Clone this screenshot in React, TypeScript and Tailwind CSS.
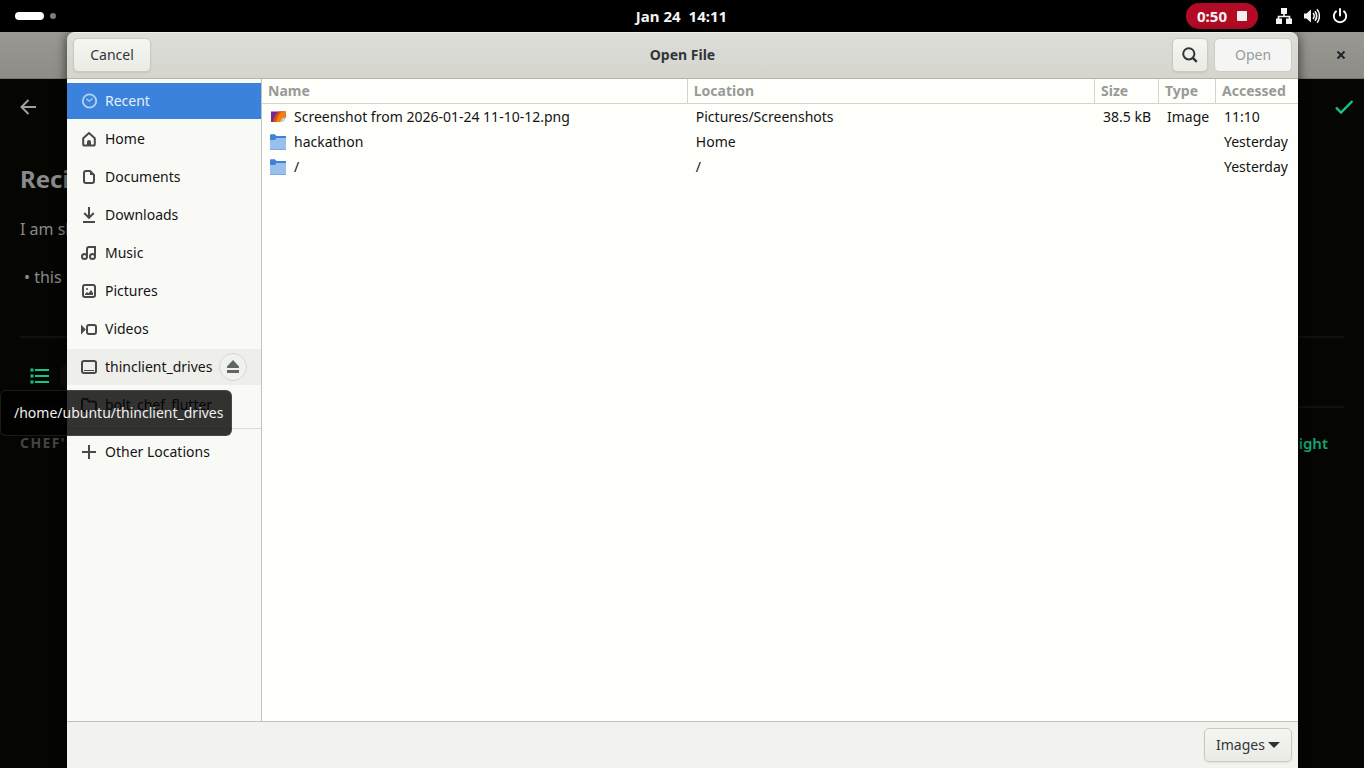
import type { ReactNode } from "react";

function Icon({ children, className = "h-4 w-4" }: { children: ReactNode; className?: string }) {
  return (
    <svg
      viewBox="0 0 16 16"
      className={`${className} shrink-0`}
      fill="none"
      stroke="currentColor"
      strokeWidth="2"
      aria-hidden="true"
    >
      {children}
    </svg>
  );
}

const icons = {
  recent: (
    <Icon>
      <circle cx="8.5" cy="8" r="6.7" strokeWidth="1.8" />
      <path d="M5.3 5.8 8.3 8.2 11.6 5.4" strokeWidth="1.2" />
    </Icon>
  ),
  home: (
    <Icon>
      <path d="M2.2 7.2 8 2l5.8 5.2V13a1.6 1.6 0 0 1-1.6 1.6H3.8A1.6 1.6 0 0 1 2.2 13Z" strokeLinejoin="round" />
      <path d="M6 15v-4a2 2 0 0 1 4 0v4Z" fill="currentColor" stroke="none" />
    </Icon>
  ),
  documents: (
    <Icon>
      <path d="M9 2H5a2 2 0 0 0-2 2v8a2 2 0 0 0 2 2h6a2 2 0 0 0 2-2V6Z" />
      <path d="M9 1.5V6h4.5Z" fill="currentColor" stroke="none" />
    </Icon>
  ),
  downloads: (
    <Icon>
      <path d="M8 0v10M3.2 6 8 10.8 12.8 6M2 15h12" />
    </Icon>
  ),
  music: (
    <Icon>
      <circle cx="3.5" cy="11.5" r="2.5" />
      <circle cx="11.5" cy="11.5" r="2.5" />
      <path d="M6 11.5V4a2 2 0 0 1 2-2h6v9.5" />
    </Icon>
  ),
  pictures: (
    <Icon>
      <rect x="2" y="2" width="12" height="12" rx="2" />
      <circle cx="6" cy="6" r="1" fill="currentColor" stroke="none" />
      <path d="M4 12v-1l2-2 1.5 1.2L10 7l2 3v2Z" fill="currentColor" stroke="none" />
    </Icon>
  ),
  videos: (
    <Icon>
      <rect x="6" y="4" width="9" height="9" rx="2" />
      <path d="M0 3.5 4.8 8.5 0 13.5Z" fill="currentColor" stroke="none" />
    </Icon>
  ),
  drive: (
    <Icon>
      <rect x="1" y="2" width="14" height="12" rx="2" />
      <path d="M3 11.5h10" strokeWidth="1" />
    </Icon>
  ),
  folder: (
    <Icon>
      <path d="M1 12V4a2 2 0 0 1 2-2h3l2 2.5h5a2 2 0 0 1 2 2V12a2 2 0 0 1-2 2H3a2 2 0 0 1-2-2Z" />
    </Icon>
  ),
  plus: (
    <Icon>
      <path d="M8 1v14M1 8h14" />
    </Icon>
  ),
};

const places = [
  { label: "Recent", icon: icons.recent },
  { label: "Home", icon: icons.home },
  { label: "Documents", icon: icons.documents },
  { label: "Downloads", icon: icons.downloads },
  { label: "Music", icon: icons.music },
  { label: "Pictures", icon: icons.pictures },
  { label: "Videos", icon: icons.videos },
];

function PlaceRow({ label, icon, selected = false }: { label: string; icon: ReactNode; selected?: boolean }) {
  return (
    <button
      type="button"
      className={`flex h-9 w-full items-center gap-2 pl-3.5 text-left ${
        selected ? "bg-[#3a82db] text-[#e4effc]" : "text-[#141414]"
      }`}
    >
      <span className={selected ? "text-[#b4d0f3]" : "text-[#484a48]"}>{icon}</span>
      {label}
    </button>
  );
}

function TopBar() {
  return (
    <header className="grid h-8 grid-cols-[1fr_auto_1fr] items-center bg-black pr-4 pl-[15px] text-[15px] font-bold text-[#f4f4f4]">
      <button type="button" aria-label="Activities" className="flex items-center gap-1.5 justify-self-start">
        <span className="h-2 w-[29px] rounded-full bg-white" />
        <span className="h-1.5 w-1.5 rounded-full bg-[#7d7d7d]" />
      </button>
      <button type="button" className="flex gap-2">
        <span>Jan 24</span>
        <span>14:11</span>
      </button>
      <div className="flex items-center gap-[18px] justify-self-end">
        <button type="button" className="flex h-[26px] w-[72px] items-center justify-center gap-2.5 rounded-full bg-[#b30b26]">
          0:50
          <span className="h-2.5 w-2.5 rounded-[1px] bg-[#f3f1f0]" />
        </button>
        <button type="button" aria-label="System menu" className="flex items-center gap-3">
          <Icon>
            <path d="M5 0h6v6H5ZM0 10.5h6V16H0ZM10 10.5h6V16h-6Z" fill="currentColor" stroke="none" />
            <path d="M8 5v3.5M2.5 11V8.500h11V11" strokeWidth="1.6" />
          </Icon>
          <Icon>
            <path d="M0 5.5h2.5L7 1.5v13L2.500 10.500H0Z" fill="currentColor" stroke="none" />
            <path d="M9 5.200a4 4 0 0 1 0 5.600" strokeWidth="1.700" />
            <path d="M11 3.200c2.200 2.500 2.200 7.100 0 9.600" strokeWidth="1.700" />
            <path d="M13 1.200c3.200 3.500 3.200 10.100 0 13.600" strokeWidth="1.500" />
          </Icon>
          <Icon>
            <path d="M4.600 2.900a6.200 6.200 0 1 0 6.800 0" />
            <path d="M8 1v6.500" strokeLinecap="round" />
          </Icon>
        </button>
      </div>
    </header>
  );
}

function RecipeWindow() {
  return (
    <div className="flex flex-1 flex-col bg-[#050601]">
      <div className="flex h-[47px] items-center justify-end border-b border-[#77756f] bg-linear-to-b from-[#999893] to-[#8d8c87] px-4">
        <button type="button" aria-label="Close" className="text-[#222629]">
          <svg viewBox="0 0 14 14" className="h-3.5 w-3.5" stroke="currentColor" strokeWidth="2" aria-hidden="true">
            <path d="m3.500 3.500 7 7m0-7-7 7" />
          </svg>
        </button>
      </div>
      <div className="flex h-14 items-center justify-between pr-2.5 pl-5">
        <button type="button" aria-label="Back" className="text-[#a0a0a0]">
          <Icon>
            <path d="M16 8H1.500M8.500 1 1.500 8l7 7" />
          </Icon>
        </button>
        <button type="button" aria-label="Save" className="text-[#15c48a]">
          <svg viewBox="0 0 20 16" className="h-4 w-5" fill="none" stroke="currentColor" strokeWidth="2.400" aria-hidden="true">
            <path d="m2 8.500 5 5L18.500 2" />
          </svg>
        </button>
      </div>
      <main className="flex flex-col px-5 text-[#8a898c]">
        <h1 className="pt-7 text-2xl leading-8 font-bold">Reci</h1>
        <p className="pt-[22px] text-base leading-6">I am sh</p>
        <ul className="pt-6 text-base leading-6">
          <li className="pl-1">• this</li>
        </ul>
        <div className="mt-[47px] flex h-[72px] items-center gap-2.5 border-y-2 border-[#11120f] pt-2 pl-2.5">
          <button type="button" aria-label="List" className="text-[#15c48a]">
            <svg viewBox="0 0 20 16" className="h-4 w-5" stroke="currentColor" strokeWidth="2" aria-hidden="true">
              <path d="M5 2h14M5 8h14M5 14h14" />
              <path d="M.5 2h3M.5 8h3M.5 14h3" strokeWidth="3" />
            </svg>
          </button>
          <span className="h-9 w-9 rounded-full bg-[#0d0d0d]" />
        </div>
        <div className="flex h-[70px] items-center justify-between pr-4 font-bold">
          <h2 className="tracking-widest text-[#444444]">CHEF'S</h2>
          <button type="button" className="text-[15px] font-semibold text-[#12a374]">Insight</button>
        </div>
      </main>
    </div>
  );
}

const buttonLook =
  "h-[34px] rounded-[5px] border border-[#cbc9c1] bg-linear-to-b from-[#f5f5f1] to-[#ebebe6] text-[#30363a] shadow-[0_1px_2px_rgba(0,0,0,0.08)]";

function DialogHeader() {
  return (
    <div className="grid h-[47px] grid-cols-[1fr_auto_1fr] items-center rounded-t-lg border-t border-b border-t-[#efeeea] border-b-[#bbb3a8] bg-linear-to-b from-[#deded9] to-[#d5d5ce] px-1.5 pb-0.5">
      <button type="button" className={`${buttonLook} w-[78px] justify-self-start`}>Cancel</button>
      <h2 id="dialog-title" className="font-bold text-[#30363a]">Open File</h2>
      <div className="flex gap-1.5 justify-self-end">
        <button type="button" aria-label="Search" className={`${buttonLook} flex w-9 items-center justify-center`}>
          <Icon>
            <circle cx="6.800" cy="6.800" r="5.600" />
            <path d="m10.800 10.800 4 4" strokeWidth="2.400" />
          </Icon>
        </button>
        <button
          type="button"
          disabled
          className="h-[34px] w-[78px] rounded-[5px] border border-[#cdccc5] bg-[#f5f6f3] text-[#999c9b]"
        >
          Open
        </button>
      </div>
    </div>
  );
}

function Sidebar() {
  return (
    <nav aria-label="Places" className="w-[195px] shrink-0 border-r border-[#c1c1bf] bg-[#f9faf6] pt-1">
      <ul className="flex flex-col gap-0.5">
        {places.map((place, index) => (
          <li key={place.label}>
            <PlaceRow label={place.label} icon={place.icon} selected={index === 0} />
          </li>
        ))}
        <li className="flex items-center bg-[#eeeeea] pr-3.5">
          <PlaceRow label="thinclient_drives" icon={icons.drive} />
          <button
            type="button"
            aria-label="Eject"
            className="flex h-7 w-7 shrink-0 items-center justify-center rounded-full border border-[#d6d6d2] bg-[#f1f1ed] text-[#5f6764]"
          >
            <Icon>
              <path d="M8 1 14 7.500V9H2V7.500ZM2 11h12v3H2Z" fill="currentColor" stroke="none" />
            </Icon>
          </button>
        </li>
        <li>
          <PlaceRow label="bolt_chef_flutter" icon={icons.folder} />
        </li>
      </ul>
      <div className="mt-[5px] border-t border-[#dcdcd8] pt-[5px]">
        <PlaceRow label="Other Locations" icon={icons.plus} />
      </div>
    </nav>
  );
}

function FolderIcon() {
  return (
    <svg viewBox="0 0 16 16" className="h-4 w-4 shrink-0" aria-hidden="true">
      <path d="M0 1.500C0 .7.500.200 1.200.200h3.600L6.500 2H16v6H0Z" fill="#3f83d6" />
      <path d="M0 6h5L6.500 4H16v12H0Z" fill="#98bfee" />
      <path d="M0 15h16v1H0Z" fill="#7ea9de" />
    </svg>
  );
}

function ImageIcon() {
  return (
    <svg viewBox="0 0 16 16" className="h-4 w-4 shrink-0" aria-hidden="true">
      <path d="M1 2.500h14.500v6L11 13H1Z" fill="#6e2d8e" />
      <path d="M3 13C4 8.500 6 3.500 9.500 2.500h6v6L11 13Z" fill="#dd4b12" />
      <path d="M6 13C7 8.500 9 4.500 12 2.500h3.500v6L11 13Z" fill="#f57f0b" />
      <path d="M10.500 13c0-3 1.500-4.500 5-4.500 0 2.500-2 4.500-5 4.500Z" fill="#c9c9c9" />
    </svg>
  );
}

const files = [
  {
    name: "Screenshot from 2026-01-24 11-10-12.png",
    icon: <ImageIcon />,
    location: "Pictures/Screenshots",
    size: "38.5 kB",
    type: "Image",
    accessed: "11:10",
  },
  { name: "hackathon", icon: <FolderIcon />, location: "Home", size: "", type: "", accessed: "Yesterday" },
  { name: "/", icon: <FolderIcon />, location: "/", size: "", type: "", accessed: "Yesterday" },
];

const headings = ["Name", "Location", "Size", "Type", "Accessed"];

function FileTable() {
  return (
    <div className="min-w-0 flex-1 bg-[#fefffb]">
      <table className="w-full table-fixed border-separate border-spacing-0 whitespace-nowrap text-[#141414]">
        <colgroup>
          <col className="w-[41.1%]" />
          <col />
          <col className="w-16" />
          <col className="w-[57px]" />
          <col className="w-[82px]" />
        </colgroup>
        <thead>
          <tr className="h-[25px] text-left text-[#989a98]">
            {headings.map((heading) => (
              <th
                key={heading}
                scope="col"
                className="border-r border-b border-[#d4d4cf] p-0 pl-1.5 font-bold last:border-r-0"
              >
                {heading}
              </th>
            ))}
          </tr>
        </thead>
        <tbody>
          {files.map((file) => (
            <tr key={file.name} className="h-[25px]">
              <td className="p-0 pl-2">
                <div className="flex items-center gap-2">
                  {file.icon}
                  {file.name}
                </div>
              </td>
              <td className="p-0 pl-2">{file.location}</td>
              <td className="p-0 pr-2 text-right">{file.size}</td>
              <td className="p-0 pl-2">{file.type}</td>
              <td className="p-0 pl-2">{file.accessed}</td>
            </tr>
          ))}
        </tbody>
      </table>
    </div>
  );
}

function FileDialog() {
  return (
    <section
      role="dialog"
      aria-labelledby="dialog-title"
      className="absolute top-8 right-[66px] bottom-0 left-[67px] flex flex-col rounded-t-lg shadow-[0_2px_10px_2px_rgba(0,0,0,0.5)]"
    >
      <DialogHeader />
      <div className="flex min-h-0 flex-1">
        <Sidebar />
        <FileTable />
      </div>
      <footer className="flex justify-end border-t border-[#c1c1bf] bg-[#f2f2ee] p-1.5">
        <div className="relative">
          <select aria-label="File type" className={`${buttonLook} w-[88px] appearance-none pl-[11px]`}>
            <option>Images</option>
          </select>
          <svg
            viewBox="0 0 12 6"
            className="pointer-events-none absolute top-3.5 right-3 h-1.5 w-3 text-[#2e3436]"
            aria-hidden="true"
          >
            <path d="M0 0h12L6 6Z" fill="currentColor" />
          </svg>
        </div>
      </footer>
    </section>
  );
}

export default function App() {
  return (
    <div className="relative flex min-h-screen flex-col overflow-hidden bg-black font-['Noto_Sans','Open_Sans',sans-serif] text-sm leading-5">
      <TopBar />
      <RecipeWindow />
      <FileDialog />
      <div
        role="tooltip"
        className="absolute top-[390px] left-0 rounded-md border border-white/10 bg-black/80 py-3 pr-2 pl-[13px] text-[#efefef]"
      >
        /home/ubuntu/thinclient_drives
      </div>
    </div>
  );
}
